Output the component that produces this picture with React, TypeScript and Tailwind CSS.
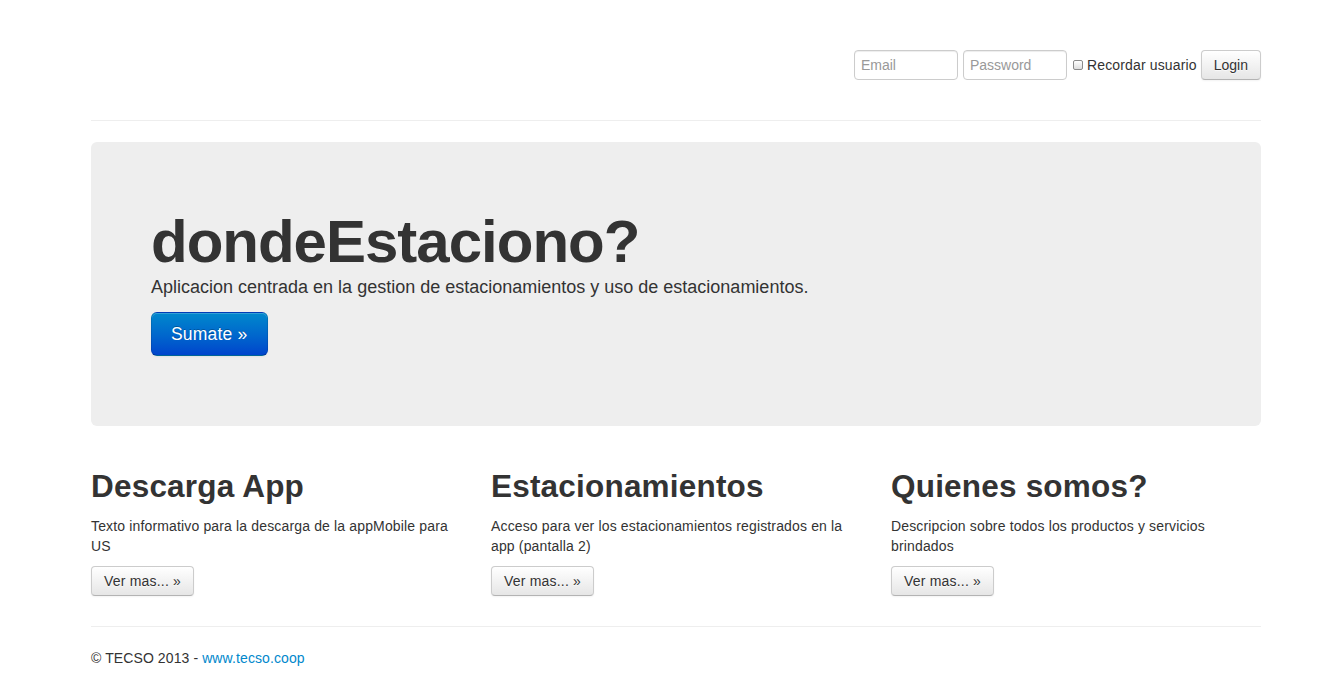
import React from "react";

const btn =
  "inline-flex items-center rounded-[4px] border border-[#ccc] border-b-[#b3b3b3] bg-linear-to-b from-white to-[#e6e6e6] text-[#333] shadow-[inset_0_1px_0_rgba(255,255,255,0.2),0_1px_2px_rgba(0,0,0,0.05)] [text-shadow:0_1px_1px_rgba(255,255,255,0.75)]";

const input =
  "h-[30px] w-[104px] rounded-[4px] border border-[#ccc] bg-white px-[6px] text-[14px] text-[#555] shadow-[inset_0_1px_1px_rgba(0,0,0,0.075)] outline-none placeholder:text-[#999]";

function Feature({ title, text }: { title: string; text: string }) {
  return (
    <div className="w-[370px]">
      <h2 className="my-[10px] text-[31.5px] font-bold leading-[40px] tracking-[0.2px]">{title}</h2>
      <p className="mb-[10px] tracking-[0.15px]">{text}</p>
      <p className="mb-[10px]">
        <a className={`${btn} h-[30px] px-[12px] tracking-[0.2px]`}>Ver mas... &raquo;</a>
      </p>
    </div>
  );
}

export default function App() {
  return (
    <div className="min-h-screen bg-white pl-[91px] font-['Liberation_Sans',Arial,sans-serif] text-[14px] leading-[20px] text-[#333]">
      <div className="w-[1170px]">
        <div className="flex justify-end pt-[50px]">
          <form className="flex items-center">
            <input className={input} placeholder="Email" />
            <input className={`${input} ml-[5px]`} placeholder="Password" type="password" />
            <label className="ml-[6px] flex items-center tracking-[0.15px]">
              <span className="mr-[4px] h-[10px] w-[10px] rounded-[2px] border border-[#8a8a8a] bg-linear-to-b from-white to-[#ddd]" />
              Recordar usuario
            </label>
            <button type="button" className={`${btn} ml-[4px] h-[30px] px-[12px]`}>
              Login
            </button>
          </form>
        </div>

        <hr className="mb-[20px] mt-[40px] border-0 border-t border-b border-t-[#eee] border-b-white" />

        <div className="mb-[30px] rounded-[6px] bg-[#eee] p-[60px] text-[18px] leading-[30px]">
          <h1 className="mt-[10px] mb-0 text-[60px] font-bold leading-[60px] tracking-[-1px]">dondeEstaciono?</h1>
          <p className="mb-[10px]">Aplicacion centrada en la gestion de estacionamientos y uso de estacionamientos.</p>
          <p className="mb-[10px]">
            <a className="inline-flex h-[44px] items-center rounded-[6px] border border-[rgba(0,0,0,0.1)] border-b-[rgba(0,0,0,0.25)] bg-linear-to-b from-[#0088cc] to-[#0044cc] px-[19px] text-[17.5px] leading-[20px] tracking-[0.2px] text-white shadow-[inset_0_1px_0_rgba(255,255,255,0.2),0_1px_2px_rgba(0,0,0,0.05)] [text-shadow:0_-1px_0_rgba(0,0,0,0.25)]">
              Sumate &raquo;
            </a>
          </p>
        </div>

        <div className="flex gap-[30px]">
          <Feature title="Descarga App" text="Texto informativo para la descarga de la appMobile para US" />
          <Feature
            title="Estacionamientos"
            text="Acceso para ver los estacionamientos registrados en la app (pantalla 2)"
          />
          <Feature title="Quienes somos?" text="Descripcion sobre todos los productos y servicios brindados" />
        </div>

        <hr className="my-[20px] border-0 border-t border-b border-t-[#eee] border-b-white" />

        <footer>
          <p className="tracking-[0.1px]">
            &copy; TECSO 2013 - <a className="text-[#0088cc]">www.tecso.coop</a>
          </p>
        </footer>
      </div>
    </div>
  );
}
